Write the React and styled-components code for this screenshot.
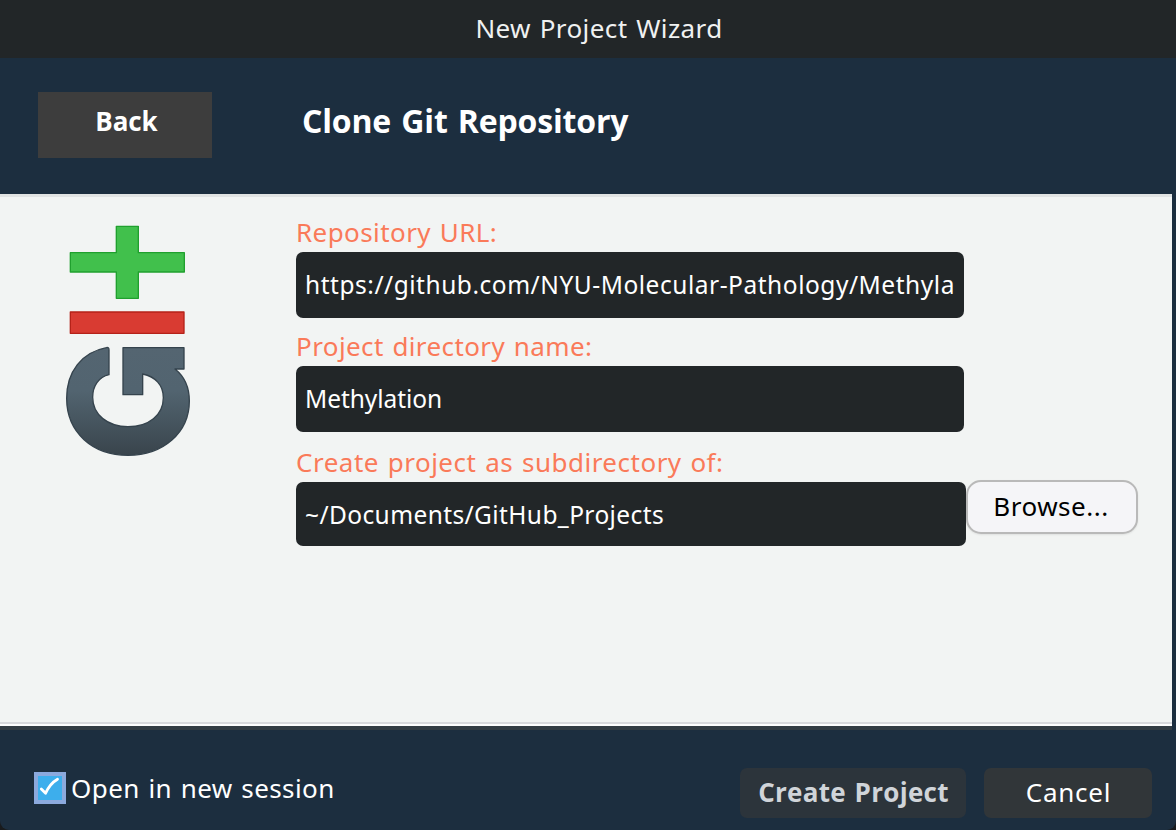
import React from 'react';
import styled, { createGlobalStyle } from 'styled-components';

const GlobalStyle = createGlobalStyle`
  * { box-sizing: border-box; }
  body {
    margin: 0;
    overflow: hidden;
    background: #191b1d;
    font-family: "Noto Sans", "Open Sans", sans-serif;
    font-size: 26px;
  }
`;

const Window = styled.main`
  display: flex;
  flex-direction: column;
  width: 1176px;
  height: 830px;
  border-radius: 0 0 9px 9px;
  background: #1c2e3f;
  overflow: hidden;
`;

const TitleBar = styled.header`
  display: flex;
  align-items: center;
  justify-content: center;
  height: 58px;
  padding: 0 0 3px 22px;
  background: #222628;
  color: #f0f1f1;
  letter-spacing: 0.42px;
  word-spacing: 1.5px;
`;

const StepBar = styled.div`
  display: flex;
  align-items: flex-start;
  height: 136px;
  padding: 34px 38px 0;
`;

const BackButton = styled.button`
  width: 174px;
  height: 66px;
  padding: 0 0 8px 3px;
  border: 0;
  background: #3d3d3d;
  color: #fff;
  font: 670 26px "Open Sans", sans-serif;
  letter-spacing: -0.1px;
`;

const Heading = styled.h1`
  margin: 6px 0 0 90px;
  color: #fff;
  font: 670 32px/46px "Open Sans", sans-serif;
  letter-spacing: -0.16px;
  word-spacing: 2px;
`;

const Content = styled.section`
  display: flex;
  align-items: flex-start;
  width: 1172px;
  height: 536px;
  padding-top: 15px;
  border-top: 3px solid #e1e3e3;
  border-bottom: 4px solid #323c43;
  background: linear-gradient(#f2f4f3 0 525px, #d8d9dc 525px 527px, #fdfdfd 527px 529px);
`;

const GitLogo = styled.svg`
  flex: none;
  width: 180px;
  height: 260px;
  margin: -2px 76px 0 40px;
`;

const Fields = styled.form`
  display: flex;
  flex-direction: column;
`;

const Label = styled.label`
  height: 40px;
  margin-top: ${({ $gap }) => $gap}px;
  color: #fa7a59;
  line-height: 40px;
  letter-spacing: ${({ $tracking }) => $tracking}px;
  word-spacing: 1.5px;
`;

const TextInput = styled.input`
  width: ${({ $wide }) => ($wide ? 670 : 668)}px;
  height: ${({ $wide }) => ($wide ? 64 : 66)}px;
  padding: 0 8px ${({ $wide }) => ($wide ? 0 : 2)}px 9px;
  border: 0;
  border-radius: 7px;
  outline: 0;
  background: #222628;
  color: #fff;
  font: 24.5px "Noto Sans", sans-serif;
  letter-spacing: ${({ $tracking }) => $tracking}px;
`;

const DirectoryRow = styled.div`
  display: flex;
  align-items: flex-start;
`;

const BrowseButton = styled.button`
  width: 172px;
  height: 54px;
  margin-top: -2px;
  padding: 0 2px 2px 0;
  border: 2px solid #b9b9b9;
  border-radius: 15px;
  background: #f5f5f8;
  box-shadow: 0 1px 2px rgba(0, 0, 0, 0.08);
  color: #000;
  font: 26px "Noto Sans", sans-serif;
  letter-spacing: 0.53px;
`;

const Footer = styled.footer`
  display: flex;
  align-items: flex-start;
  justify-content: space-between;
  height: 100px;
  padding: 38px 24px 0 34px;
`;

const SessionOption = styled.label`
  display: flex;
  align-items: flex-start;
  gap: 5px;
  padding-top: 4px;
  color: #fff;
  line-height: 32px;
  letter-spacing: 0.42px;
  word-spacing: 1.5px;
`;

const CheckBox = styled.span`
  width: 32px;
  height: 32px;
  border: 4px solid #8ba9dd;
  background: #3daeec;

  svg { display: block; width: 24px; height: 24px; }
`;

const Actions = styled.div`
  display: flex;
  gap: 18px;
`;

const ActionButton = styled.button`
  width: ${({ $primary }) => ($primary ? 226 : 168)}px;
  height: 50px;
  padding: 0 0 2px 1px;
  border: 0;
  border-radius: 7px;
  background: ${({ $primary }) => ($primary ? '#2c343b' : '#313639')};
  color: ${({ $primary }) => ($primary ? '#d0d4d9' : '#fff')};
  font: ${({ $primary }) => ($primary ? '670 26px "Open Sans"' : '400 26px "Noto Sans"')}, sans-serif;
  letter-spacing: ${({ $primary }) => ($primary ? 0.3 : 0.76)}px;
  word-spacing: 1.5px;
`;

function Logo() {
  return (
    <GitLogo viewBox="0 0 540 780" aria-label="Git">
      <defs>
        <linearGradient id="slate" x1="0" y1="0" x2="0" y2="1">
          <stop offset="0" stopColor="#546571" />
          <stop offset="0.4" stopColor="#526470" />
          <stop offset="1" stopColor="#39444c" />
        </linearGradient>
      </defs>
      <path d="M229 49H295V128H433V186H295V265H229V186H91V128H229Z" fill="#41c04c" stroke="#20a02e" strokeWidth="4" strokeLinejoin="round" />
      <rect x="91" y="306" width="341" height="64" fill="#d93b32" stroke="#b52219" strokeWidth="4" strokeLinejoin="round" />
      <path
        d="M199 413Q207 411 207 419V494C176 501 158 528 158 562C158 615 204 650 264 650C326 650 370 615 370 563C370 525 346 500 308 492V554H249V413H432V477H405C433 499 448 530 448 573C448 668 370 736 264 736C158 736 80 668 80 565C80 484 126 427 199 413Z"
        fill="url(#slate)"
        stroke="#35434d"
        strokeWidth="4"
        strokeLinejoin="round"
      />
    </GitLogo>
  );
}

export default function App() {
  return (
    <>
      <GlobalStyle />
      <Window>
        <TitleBar>New Project Wizard</TitleBar>
        <StepBar>
          <BackButton>Back</BackButton>
          <Heading>Clone Git Repository</Heading>
        </StepBar>
        <Content>
          <Logo />
          <Fields>
            <Label htmlFor="url" $gap={0} $tracking={0.42}>Repository URL:</Label>
            <TextInput id="url" $tracking={0.53} defaultValue="https://github.com/NYU-Molecular-Pathology/Methyla" />
            <Label htmlFor="name" $gap={8} $tracking={0.4}>Project directory name:</Label>
            <TextInput id="name" $tracking={-0.05} defaultValue="Methylation" />
            <Label htmlFor="parent" $gap={10} $tracking={0.5}>Create project as subdirectory of:</Label>
            <DirectoryRow>
              <TextInput id="parent" $wide $tracking={0.4} defaultValue="~/Documents/GitHub_Projects" />
              <BrowseButton type="button">Browse...</BrowseButton>
            </DirectoryRow>
          </Fields>
        </Content>
        <Footer>
          <SessionOption>
            <CheckBox role="checkbox" aria-checked="true">
              <svg viewBox="0 0 24 24" fill="none" stroke="#fff" strokeWidth="2.8" strokeLinecap="round" strokeLinejoin="round">
                <path d="M3.3 13L7.6 17.2Q12 7.5 19.5 3.2" />
              </svg>
            </CheckBox>
            Open in new session
          </SessionOption>
          <Actions>
            <ActionButton $primary>Create Project</ActionButton>
            <ActionButton>Cancel</ActionButton>
          </Actions>
        </Footer>
      </Window>
    </>
  );
}
